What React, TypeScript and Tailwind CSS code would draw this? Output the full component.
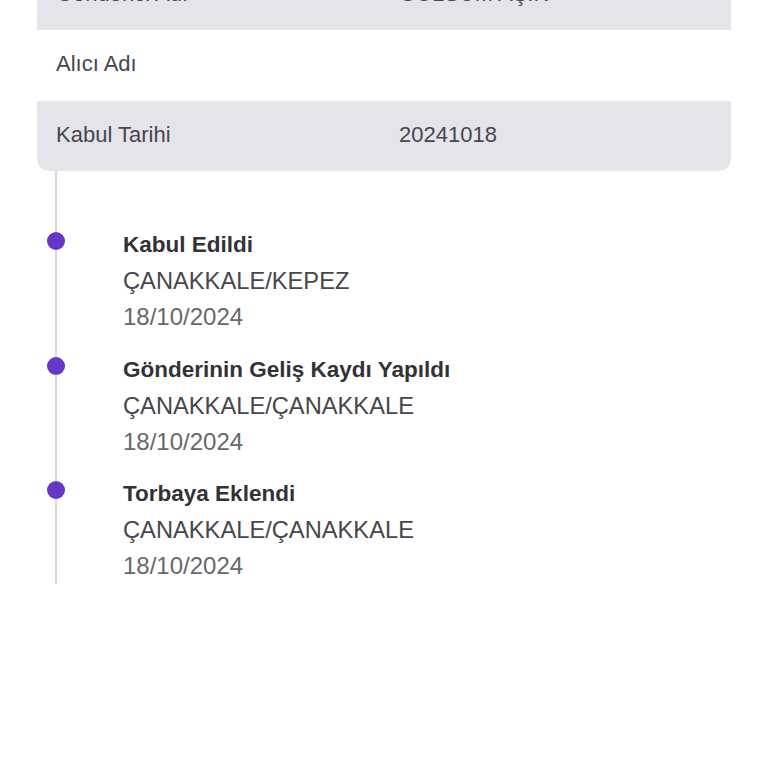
export default function App() {
  const rows = [
    { label: "Gönderici Adı", value: "GÜLSÜM AŞIK", shaded: true },
    { label: "Alıcı Adı", value: "", shaded: false },
    { label: "Kabul Tarihi", value: "20241018", shaded: true },
  ];

  const events = [
    { title: "Kabul Edildi", place: "ÇANAKKALE/KEPEZ", date: "18/10/2024" },
    { title: "Gönderinin Geliş Kaydı Yapıldı", place: "ÇANAKKALE/ÇANAKKALE", date: "18/10/2024" },
    { title: "Torbaya Eklendi", place: "ÇANAKKALE/ÇANAKKALE", date: "18/10/2024" },
  ];

  return (
    <div className="w-[768px] h-[768px] overflow-hidden bg-white font-['Liberation_Sans',Arial,sans-serif]">
      {/* Shipment info table (scrolled, top row partly hidden) */}
      <div className="mx-[37px] -mt-[40px] rounded-b-[12px] overflow-hidden">
        {rows.map((r, i) => (
          <div
            key={i}
            className={`grid grid-cols-[343px_1fr] items-center pl-[19px] pb-[4px] ${
              i === 1 ? "h-[71px]" : "h-[70px]"
            } ${r.shaded ? "bg-[#e5e4ea]" : "bg-white"}`}
          >
            <span className="text-[22px] text-[#47464c]">{r.label}</span>
            <span className="text-[22px] text-[#47464c]">{r.value}</span>
          </div>
        ))}
      </div>

      {/* Tracking timeline */}
      <div className="ml-[55px] border-l-2 border-[#d9d9dd] flex flex-col gap-[16.5px] pt-[56px]">
        {events.map((e, i) => (
          <div key={i} className="flex">
            <div className="w-[18px] h-[18px] -ml-[10px] mt-[5px] rounded-full bg-[#6437c8] shrink-0" />
            <div className="ml-[58px] flex flex-col">
              <span className="text-[22.5px] leading-[36px] font-bold text-[#333236]">{e.title}</span>
              <span className="text-[23.7px] leading-[36px] text-[#47464c]">{e.place}</span>
              <span className="text-[24px] leading-[36px] text-[#68676c]">{e.date}</span>
            </div>
          </div>
        ))}
      </div>
    </div>
  );
}
